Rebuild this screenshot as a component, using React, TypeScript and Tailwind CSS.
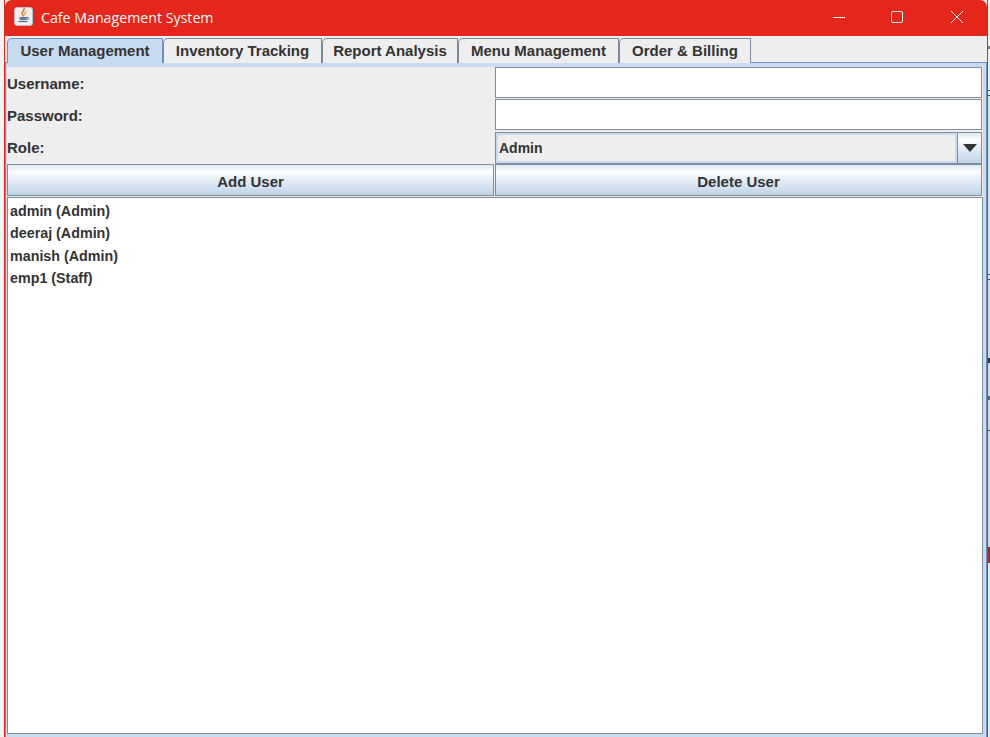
const tabs = [
  { label: "User Management", width: "w-[156px]", active: true },
  { label: "Inventory Tracking", width: "w-[159px]", active: false },
  { label: "Report Analysis", width: "w-[136px]", active: false },
  { label: "Menu Management", width: "w-[161px]", active: false },
  { label: "Order & Billing", width: "w-[132px]", active: false },
];

const users = ["admin (Admin)", "deeraj (Admin)", "manish (Admin)", "emp1 (Staff)"];

const buttonBg = "bg-[linear-gradient(to_bottom,#dfe9f3_0%,#fbfcfe_22%,#e4edf6_50%,#bfd4e8_100%)]";

// the bit of desktop that shows to the right of the window
const sliver = [
  "h-[46px] bg-[#f4f4f4]",
  "h-[3px] bg-[#777777]",
  "h-[41px] bg-[#eeeeee]",
  "h-[1px] bg-[#555555]",
  "h-[4px] bg-[#e4e8e0]",
  "h-[1px] bg-[#555555]",
  "h-[178px] bg-[#dbe5d5]",
  "h-[1px] bg-[#555555]",
  "h-[4px] bg-[#dbe5d5]",
  "h-[1px] bg-[#555555]",
  "h-[78px] bg-[#cfe0c8]",
  "h-[5px] bg-[#333333]",
  "h-[33px] bg-[#cfe0c8]",
  "h-[4px] bg-[#666666]",
  "h-[30px] bg-[#cfe0c8]",
  "h-[1px] bg-[#444444]",
  "h-[116px] bg-[#cfe0c8]",
  "h-[16px] bg-[#c4201a]",
  "h-[174px] bg-[#e6ece3]",
];

function JavaIcon() {
  return (
    <div className="w-[19px] h-[19px] rounded-[3px] bg-[#eeeeee] border border-[#b8c2cc] flex items-center justify-center">
      <svg width="15" height="16" viewBox="0 0 15 16" fill="none">
        <path d="M8 0c1.200 2.500-3 3.500-1.800 6 .3.700 1 1.300 1.200 2.500" stroke="#e2702a" strokeWidth="1.500" />
        <path d="M10.500 3.500c-1.800 1-2.300 2.300-1.200 4" stroke="#e8943a" strokeWidth="1.100" />
        <path d="M3.500 9h7.500v1.500c0 1-1 1.500-2 1.500H5.500c-1 0-2-.5-2-1.500z" fill="#5d7f9c" />
        <path d="M11 9.500h1.500c.8 0 .8 2-1.500 2" stroke="#5d7f9c" />
        <path d="M2.500 13.500h9" stroke="#4a6d8c" strokeWidth="1.200" />
      </svg>
    </div>
  );
}

function TitleBar() {
  return (
    <div className="h-9 bg-[#e5261a] rounded-t-[7px] flex items-center text-white shrink-0">
      <div className="ml-[9px] mr-[8px] -mt-[4px]">
        <JavaIcon />
      </div>
      <span className="text-[14.200px] -mt-px font-['Open_Sans',sans-serif]">Cafe Management System</span>
      <div className="ml-auto flex items-center -mt-[3px]">
        <svg width="14" height="14" viewBox="0 0 14 14" className="mr-[44px]">
          <path d="M1 7.500h12" stroke="#fff" strokeWidth="1" />
        </svg>
        <svg width="14" height="14" viewBox="0 0 14 14" className="mr-[46px]">
          <rect x="1.500" y="1.500" width="11" height="11" rx="1.500" fill="none" stroke="#fff" strokeWidth="1" />
        </svg>
        <svg width="14" height="14" viewBox="0 0 14 14" className="mr-[23px]">
          <path d="M1 1l12 12M13 1L1 13" stroke="#fff" strokeWidth="1" />
        </svg>
      </div>
    </div>
  );
}

function TabStrip() {
  return (
    <div className="h-[27px] flex pl-[2px] pt-[2px] shrink-0 border-b border-[#6f8fc8]">
      {tabs.map((tab) => (
        <div
          key={tab.label}
          className={`${tab.width} h-[25px] flex items-center justify-center border-t border-r border-l border-[#7a8a9c] rounded-tl-[5px] text-[15px] font-bold text-[#333333] ${
            tab.active ? "bg-[#c8dcf1] border-l-[#6f8fc8] border-t-[#6f8fc8] border-r-[#6f8fc8]" : "bg-[#eeeeee]"
          }`}
        >
          {tab.label}
        </div>
      ))}
    </div>
  );
}

function Field() {
  return <div className="h-[31px] bg-white border border-[#7f8c9b]" />;
}

function FormLabel({ text }: { text: string }) {
  return <div className="h-[32px] pt-[2px] flex items-center text-[15px] font-bold text-[#333333]">{text}</div>;
}

function ActionButton({ text }: { text: string }) {
  return (
    <button className={`h-[32px] pt-[4px] border border-[#7f8c9b] ${buttonBg} text-[15px] font-bold text-[#333333]`}>
      {text}
    </button>
  );
}

export default function App() {
  return (
    <div className="w-[990px] h-[737px] bg-[#f4f4f4] overflow-hidden flex font-['Liberation_Sans',Arial,sans-serif]">
      <div className="w-[4px]" />
      <div className="w-[984px] h-[737px] flex flex-col bg-[#eeeeee] border-x border-[#e5261a]">
        <TitleBar />
        <div className="flex-1 flex flex-col">
          <TabStrip />
          <div className="flex-1 border-x-[1px] border-[#6f8fc8] bg-[#c8dcf1] pb-[3px] pr-[3px] flex flex-col">
            <div className="flex-1 flex flex-col bg-[#eeeeee] mt-[4px] ml-[1px]">
              <div className="grid grid-cols-[487px_487px] gap-x-px">
                <FormLabel text="Username:" />
                <Field />
                <FormLabel text="Password:" />
                <Field />
                <FormLabel text="Role:" />
                <div className="h-[32px] flex border border-[#7f8c9b] mt-[1px]">
                  <div className="flex-1 bg-[#eeeeee] border-2 border-[#c8dcf1] flex items-center pl-px text-[14px] font-bold text-[#333333]">
                    Admin
                  </div>
                  <div className={`w-[24px] border-l border-[#7f8c9b] ${buttonBg} flex items-center justify-center`}>
                    <svg width="14" height="8" viewBox="0 0 14 8">
                      <path d="M0 0h14L7 8z" fill="#333333" />
                    </svg>
                  </div>
                </div>
                <ActionButton text="Add User" />
                <ActionButton text="Delete User" />
              </div>
              <div className="flex-1 mt-px bg-white border border-[#7f8c9b] pl-[2px] pt-[2px] text-[14.300px] font-bold text-[#333333]">
                {users.map((user) => (
                  <div key={user} className="h-[22.500px] flex items-center">
                    {user}
                  </div>
                ))}
              </div>
            </div>
          </div>
        </div>
      </div>
      <div className="w-[2px] h-full flex flex-col">
        {sliver.map((seg, i) => (
          <div key={i} className={seg} />
        ))}
      </div>
    </div>
  );
}
